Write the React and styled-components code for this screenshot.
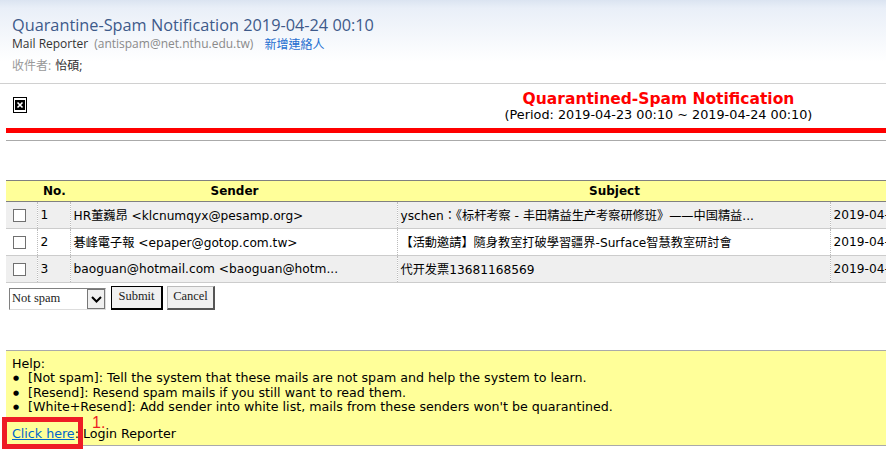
import React from 'react';
import styled, { createGlobalStyle } from 'styled-components';

const GlobalStyle = createGlobalStyle`
  html, body {
    margin: 0;
    padding: 0;
    background: #fff;
    overflow: hidden;
  }
`;

const Page = styled.div`
  position: relative;
  width: 886px;
  height: 449px;
  overflow: hidden;
  font-family: "DejaVu Sans", "Noto Sans CJK TC", sans-serif;
  font-size: 12px;
  color: #000;
`;

const MailHeader = styled.header`
  height: 84px;
  box-sizing: border-box;
  padding: 14px 0 0 12px;
  border-bottom: 1px solid #d0d0d0;
  background: linear-gradient(#dbe4f1 0, #e9eff8 8px, #ffffff 62px);
  font-family: "Open Sans", "Noto Sans CJK TC", sans-serif;
`;

const MailTitle = styled.div`
  font-size: 16.3px;
  line-height: 22px;
  color: #3e5a8a;
`;

const MailFrom = styled.div`
  display: flex;
  align-items: center;
  height: 15px;
  font-size: 12px;
  color: #333;
`;

const MailAddress = styled.span`
  margin-left: 6px;
  color: #8a8a8a;
`;

const AddContact = styled.span`
  margin-left: 11px;
  color: #1f6fd0;
`;

const MailTo = styled.div`
  margin-top: 7px;
  font-size: 12px;
  line-height: 16px;
  color: #333;
`;

const MailToLabel = styled.span`
  color: #999;
  margin-right: 4px;
`;

const Report = styled.div`
  padding-left: 6px;
`;

const Banner = styled.div`
  display: flex;
  height: 44px;
  box-sizing: border-box;
  padding: 13px 0 0 7px;
`;

const BrokenImage = styled.div`
  width: 14px;
  height: 16px;
  display: flex;
  align-items: center;
  justify-content: center;
  box-sizing: border-box;
  border: 1px solid #000;
  background: #fff;
`;

const BannerText = styled.div`
  flex: 1;
  padding-left: 404px;
  margin-top: -7px;
  text-align: center;
`;

const BannerTitle = styled.div`
  font-size: 15.5px;
  line-height: 18px;
  font-weight: bold;
  color: #ff0000;
`;

const BannerPeriod = styled.div`
  font-size: 12.8px;
  line-height: 15px;
  margin-top: -1px;
`;

const RedRule = styled.div`
  height: 5px;
  background: #ff0000;
`;

const GrayRule = styled.div`
  height: 1px;
  margin-top: 7px;
  background: #aaa;
`;

const MailTable = styled.table`
  width: 950px;
  margin-top: 39px;
  border-collapse: collapse;
  table-layout: fixed;
`;

const HeadRow = styled.tr`
  height: 21px;
  background: #ffff99;
  border-top: 1px solid #808080;
  border-bottom: 1px solid #808080;
`;

const HeadCell = styled.th`
  padding: 0 0 0 2px;
  font-size: 12px;
  font-weight: bold;
  text-align: center;
`;

const Row = styled.tr`
  height: 27px;
  background: ${(p) => (p.$shade ? '#efefef' : '#fff')};
  border-bottom: 1px solid #ccc;
`;

const Cell = styled.td`
  padding: 0 0 0 3px;
  font-size: 12.2px;
  white-space: nowrap;
  overflow: hidden;
  border-left: ${(p) => (p.$first ? '0' : '1px dotted #bbb')};
`;

const CheckBox = styled.span`
  display: block;
  width: 11px;
  height: 11px;
  margin-left: 4px;
  background: #fff;
  border: 1px solid #707070;
`;

const ActionBar = styled.div`
  display: flex;
  align-items: flex-start;
  gap: 4px;
  margin-top: 3px;
  font-family: "Liberation Serif", serif;
  font-size: 12.5px;
  color: #222;
`;

const FakeSelect = styled.div`
  display: flex;
  width: 97px;
  height: 22px;
  margin: 2px 1px 0 3px;
  box-sizing: border-box;
  border: 1px solid #808080;
  border-right-color: #ddd;
  border-bottom-color: #ddd;
  background: #fff;
`;

const SelectValue = styled.div`
  flex: 1;
  padding-left: 2px;
  line-height: 18px;
`;

const SelectArrow = styled.div`
  width: 18px;
  display: flex;
  align-items: center;
  justify-content: center;
  box-sizing: border-box;
  border: 1px solid #777;
  background: #f0f0f0;
`;

const ActionButton = styled.div`
  width: ${(p) => p.$width}px;
  height: 24px;
  box-sizing: border-box;
  line-height: 19px;
  text-align: center;
  background: #f0f0f0;
  border: 1px solid ${(p) => (p.$primary ? '#000' : '#bbb')};
  border-right: 2px solid ${(p) => (p.$primary ? '#000' : '#555')};
  border-bottom: 2px solid ${(p) => (p.$primary ? '#000' : '#555')};
`;

const HelpBox = styled.div`
  height: 96px;
  margin-top: 40px;
  box-sizing: border-box;
  padding: 6px 0 0 6px;
  background: #ffff99;
  border-top: 1px solid #aaa;
  border-bottom: 1px solid #aaa;
  font-size: 12.65px;
  line-height: 14.3px;
  white-space: nowrap;
`;

const HelpItem = styled.div`
  display: flex;
`;

const Bullet = styled.span`
  width: 16px;
  font-size: 7px;
  padding-left: 1px;
  box-sizing: border-box;
`;

const LoginLine = styled.div`
  margin-top: 13px;
`;

const HelpLink = styled.span`
  color: #0066cc;
  text-decoration: underline;
`;

const Callout = styled.div`
  position: absolute;
  left: 2px;
  top: 417px;
  width: 81px;
  height: 32px;
  box-sizing: border-box;
  border: 5px solid #ee1c25;
`;

const CalloutNumber = styled.div`
  position: absolute;
  left: 92px;
  top: 415px;
  font-family: "Liberation Sans", sans-serif;
  font-size: 16px;
  line-height: 16px;
  color: #ee1c25;
`;

const rows = [
  { no: 1, sender: 'HR董巍昂 <klcnumqyx@pesamp.org>', subject: 'yschen：《标杆考察 - 丰田精益生产考察研修班》——中国精益...', shade: true },
  { no: 2, sender: '碁峰電子報 <epaper@gotop.com.tw>', subject: '【活動邀請】隨身教室打破學習疆界-Surface智慧教室研討會', shade: false },
  { no: 3, sender: 'baoguan@hotmail.com <baoguan@hotm...', subject: '代开发票13681168569', shade: true },
];

const helpItems = [
  '[Not spam]: Tell the system that these mails are not spam and help the system to learn.',
  '[Resend]: Resend spam mails if you still want to read them.',
  "[White+Resend]: Add sender into white list, mails from these senders won't be quarantined.",
];

export default function App() {
  return (
    <Page>
      <GlobalStyle />
      <MailHeader>
        <MailTitle>Quarantine-Spam Notification 2019-04-24 00:10</MailTitle>
        <MailFrom>
          Mail Reporter
          <MailAddress>(antispam@net.nthu.edu.tw)</MailAddress>
          <AddContact>新增連絡人</AddContact>
        </MailFrom>
        <MailTo>
          <MailToLabel>收件者:</MailToLabel>怡碩;
        </MailTo>
      </MailHeader>
      <Report>
        <Banner>
          <BrokenImage>
            <svg width="10" height="10" viewBox="0 0 10 10">
              <rect width="10" height="10" fill="#000" />
              <path d="M2.5 2.5l5 5M7.5 2.5l-5 5" stroke="#fff" strokeWidth="1.6" />
            </svg>
          </BrokenImage>
          <BannerText>
            <BannerTitle>Quarantined-Spam Notification</BannerTitle>
            <BannerPeriod>(Period: 2019-04-23 00:10 ~ 2019-04-24 00:10)</BannerPeriod>
          </BannerText>
        </Banner>
        <RedRule />
        <GrayRule />
        <MailTable>
          <colgroup>
            <col width="31" />
            <col width="33" />
            <col width="327" />
            <col width="433" />
            <col width="126" />
          </colgroup>
          <thead>
            <HeadRow>
              <HeadCell />
              <HeadCell>No.</HeadCell>
              <HeadCell>Sender</HeadCell>
              <HeadCell>Subject</HeadCell>
              <HeadCell />
            </HeadRow>
          </thead>
          <tbody>
            {rows.map((row) => (
              <Row key={row.no} $shade={row.shade}>
                <Cell $first><CheckBox /></Cell>
                <Cell>{row.no}</Cell>
                <Cell>{row.sender}</Cell>
                <Cell>{row.subject}</Cell>
                <Cell>2019-04-24 00:10</Cell>
              </Row>
            ))}
          </tbody>
        </MailTable>
        <ActionBar>
          <FakeSelect>
            <SelectValue>Not spam</SelectValue>
            <SelectArrow>
              <svg width="11" height="7" viewBox="0 0 11 7">
                <path d="M1 1l4.5 4.5L10 1" fill="none" stroke="#000" strokeWidth="2" />
              </svg>
            </SelectArrow>
          </FakeSelect>
          <ActionButton $primary $width={52}>Submit</ActionButton>
          <ActionButton $width={48}>Cancel</ActionButton>
        </ActionBar>
        <HelpBox>
          <div>Help:</div>
          {helpItems.map((text) => (
            <HelpItem key={text}>
              <Bullet>●</Bullet>
              {text}
            </HelpItem>
          ))}
          <LoginLine>
            <HelpLink>Click here</HelpLink>: Login Reporter
          </LoginLine>
        </HelpBox>
      </Report>
      <Callout />
      <CalloutNumber>1.</CalloutNumber>
    </Page>
  );
}
